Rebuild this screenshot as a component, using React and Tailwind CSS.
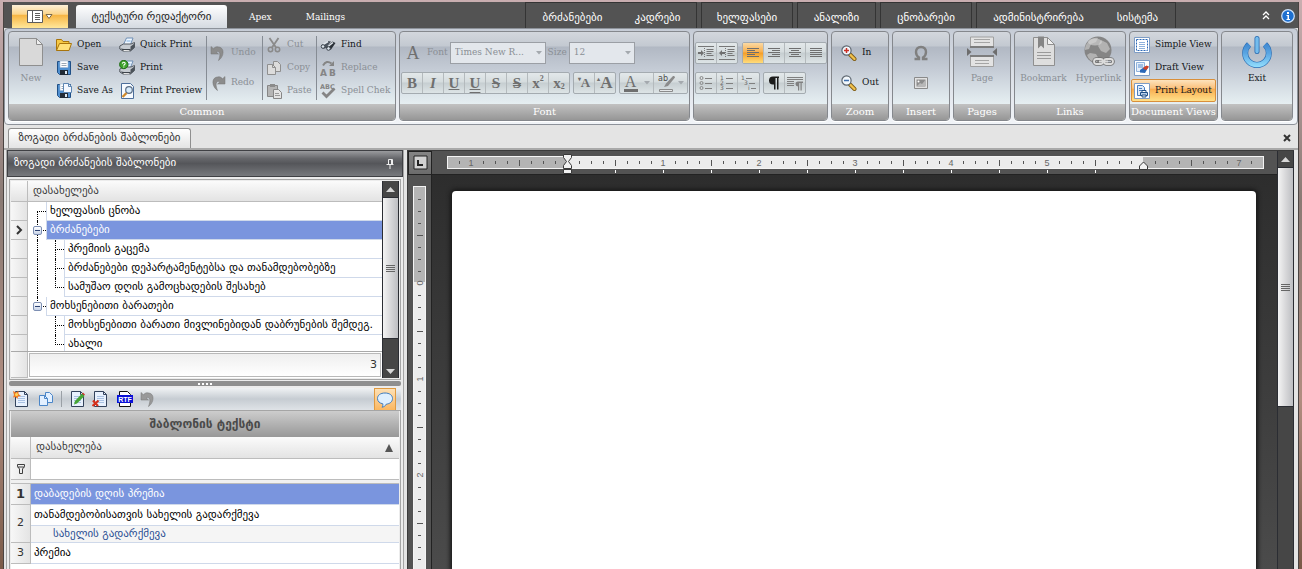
import React, { useState } from "react";

const sans = "font-['DejaVu_Sans',sans-serif]";
const serif = "font-['DejaVu_Serif',serif]";

/* ---------- icons ---------- */

const Svg = ({ w = 16, h = 16, children, className = "" }) => (
  <svg
    width={w}
    height={h}
    viewBox={`0 0 ${w} ${h}`}
    className={`block shrink-0 ${className}`}
    aria-hidden="true"
  >
    {children}
  </svg>
);

const NewIcon = () => (
  <Svg w={26} h={30}>
    <path d="M1.500 1.500h17l6 6v21h-23z" fill="#d9d9d9" stroke="#8f8f8f" />
    <path d="M18.500 1.500v6h6z" fill="#efefef" stroke="#8f8f8f" />
  </Svg>
);

const OpenIcon = () => (
  <Svg>
    <path d="M.5 13.500v-11h5l1.500 2h6v3" fill="#f6c945" stroke="#a8740c" />
    <path d="M.5 13.500l3-7h12l-2.500 7z" fill="#ffe07a" stroke="#a8740c" />
  </Svg>
);

const Floppy = () => (
  <>
    <path d="M1.500 1.500h13v13h-11l-2-2z" fill="#4f8fd0" stroke="#1f4f86" />
    <path d="M4 1h8v6.500h-8z" fill="#fff" stroke="#9fb8d4" strokeWidth=".6" />
    <path d="M5.500 3.500h5M5.500 5.500h5" stroke="#9aa7b5" />
    <path d="M4 10h8v5h-8z" fill="#222b36" />
    <path d="M9 11h2v3h-2z" fill="#dfe9f3" />
  </>
);

const SaveIcon = () => (
  <Svg>
    <Floppy />
  </Svg>
);

const SaveAsIcon = () => (
  <Svg>
    <Floppy />
    <path d="M7.500.5h5l3 3v6h-8z" fill="#f3f8ff" stroke="#5d86b3" />
    <path d="M12.500.5v3h3" fill="none" stroke="#5d86b3" />
  </Svg>
);

const Printer = () => (
  <>
    <path d="M4.500 7.500l3-6.500h6.500l-2.500 6.500z" fill="#eef6ff" stroke="#6f8fb5" />
    <path d="M7.500 4h4" stroke="#7fb0e0" />
    <path d="M.8 9l3.700-2h7.500l3.500-1.500v5l-4 3.500h-7.500l-3.200-2z" fill="#c6cbd1" stroke="#545a61" />
    <path d="M11.500 9.500l4-3v4l-4 3.500z" fill="#4c535b" />
    <path d="M1.500 11.500l3 2.500h7v-2h-6.500z" fill="#3e444b" />
    <path d="M4.500 13.500l6 .2" stroke="#f2f2f2" />
  </>
);

const QuickPrintIcon = () => (
  <Svg>
    <Printer />
  </Svg>
);

const PrintIcon = () => (
  <Svg>
    <Printer />
    <circle cx="4.800" cy="4.500" r="4.200" fill="#3fa32b" stroke="#1f6a14" />
    <path d="M3.300 3.600q.2-1.300 1.500-1.300t1.400 1.200q0 .8-1.400 1.700v.6" fill="none" stroke="#fff" strokeWidth="1.100" />
    <path d="M4.300 6.500h1v1h-1z" fill="#fff" />
  </Svg>
);

const PreviewIcon = () => (
  <Svg>
    <path d="M2.500.5h9l3 3v12h-12z" fill="#f7fbff" stroke="#4d6f9b" />
    <circle cx="10" cy="7" r="3.300" fill="#d9ecfb" stroke="#5a6e86" strokeWidth="1.200" />
    <path d="M7.500 10L3.500 14" stroke="#d08a2c" strokeWidth="2.400" />
  </Svg>
);

const UndoIcon = ({ flip, color = "#8c8c8c" }) => (
  <Svg className={flip ? "-scale-x-100" : ""}>
    <path d="M1 1.500v7.500h7.500L6 6.800C9 5.500 11.500 7.500 8.500 15.500 14 12 15.500 2 7.500 1.800 5.800 1.800 4.500 2.400 3.500 3.800z" fill={color} stroke="#777" strokeWidth=".5" />
  </Svg>
);

const CutIcon = () => (
  <Svg>
    <path d="M3.500 1l6.500 9.500M12.500 1L6 10.500" stroke="#8a8a8a" strokeWidth="1.800" />
    <circle cx="4.500" cy="12.500" r="2.200" fill="none" stroke="#8a8a8a" strokeWidth="1.500" />
    <circle cx="11.500" cy="12.500" r="2.200" fill="none" stroke="#8a8a8a" strokeWidth="1.500" />
  </Svg>
);

const CopyIcon = ({ fill = "#dcdcdc", stroke = "#8f8f8f" }) => (
  <Svg>
    <path d="M7.500 1.500h4l3 3v7h-7z" fill={fill} stroke={stroke} />
    <path d="M1.500 4.500h5l3 3v7h-8z" fill={fill} stroke={stroke} />
    <path d="M6.500 4.500v3h3" fill="none" stroke={stroke} />
  </Svg>
);

const PasteIcon = () => (
  <Svg>
    <path d="M1.500 2.500h10v11h-10z" fill="#b5b5b5" stroke="#868686" />
    <path d="M4 1h5v3h-5z" fill="#8b8b8b" />
    <path d="M7.500 6.500h5l3 3v6h-8z" fill="#e4e4e4" stroke="#868686" />
    <path d="M9 10.500h4M9 12.500h5" stroke="#999" />
  </Svg>
);

const FindIcon = () => (
  <Svg>
    <path d="M1 8.500l7-4.500 3 .5-5 6.500q-4 2-5-2.500z" fill="#4b535d" />
    <path d="M6 10.500l6.500-6 3 1.500-4.500 6.500q-4 1.500-5-2z" fill="#2b3138" />
    <path d="M3 7.500l5-3M8 9.500l5-4" stroke="#dfe5eb" strokeWidth="1.500" />
    <circle cx="3" cy="9.500" r="1.800" fill="#dfe7ef" stroke="#3b434c" />
    <circle cx="8.500" cy="11.500" r="1.800" fill="#dfe7ef" stroke="#3b434c" />
  </Svg>
);

const ReplaceIcon = () => (
  <Svg>
    <path d="M3 5.500q3.500-6 8.500-2" fill="none" stroke="#858585" strokeWidth="2" />
    <path d="M9 6h5v-5z" fill="#858585" />
    <text x="0" y="15.500" fontSize="9" fontWeight="bold" fill="#858585" className={sans}>A</text>
    <text x="9" y="15.500" fontSize="9" fontWeight="bold" fill="#858585" className={sans}>B</text>
  </Svg>
);

const SpellIcon = () => (
  <Svg>
    <text x="0" y="6" fontSize="6.500" fontWeight="bold" fill="#858585" className={sans}>ABC</text>
    <path d="M2.500 9.500l4 4 8-8" fill="none" stroke="#858585" strokeWidth="2.800" />
  </Svg>
);

const ZoomIcon = ({ out }) => (
  <Svg>
    <path d="M9 9.500l4.500 4.500" stroke="#7c5a12" strokeWidth="4" strokeLinecap="round" />
    <path d="M9.500 10l4 4" stroke="#f1c14d" strokeWidth="2.400" strokeLinecap="round" />
    <circle cx="5.500" cy="5.500" r="4.600" fill="#f2f7fb" stroke="#5d6670" strokeWidth="1.200" />
    <path d={out ? "M3 5.500h5" : "M3 5.500h5M5.500 3v5"} stroke={out ? "#3f6fae" : "#c92f24"} strokeWidth="1.500" />
  </Svg>
);

const OmegaIcon = () => (
  <Svg>
    <path d="M1.500 14h4.500v-1.500q-3-2-3-5.500 0-5 5-5t5 5q0 3.500-3 5.500v1.500h4.500" fill="none" stroke="#808080" strokeWidth="2.400" />
  </Svg>
);

const ImageIcon = () => (
  <Svg>
    <path d="M1.500 2.500h13v11h-13z" fill="#e2e2e2" stroke="#8a8a8a" />
    <path d="M3.500 4.500h9v7h-9z" fill="#8c8c8c" />
    <path d="M4 11l3-3 2 1 3-3.500v5.500z" fill="#b8b8b8" />
    <circle cx="5.500" cy="6.500" r="1" fill="#fff" />
  </Svg>
);

const PageIcon = () => (
  <Svg w={32} h={32}>
    <path d="M4.500 1v9.500h23V1z" fill="#e3e3e3" stroke="#a0a0a0" />
    <path d="M8 3.500h16M8 6.500h16" stroke="#a5a5a5" />
    <path d="M4 11h24" stroke="#7d7d7d" strokeWidth="2" />
    <path d="M1 12l4.500 4-4.500 4zM31 12l-4.500 4 4.500 4z" fill="#6d6d6d" />
    <path d="M4 20h24" stroke="#7d7d7d" strokeWidth="2" />
    <path d="M4.500 21v9.500h23V21" fill="#e3e3e3" stroke="#a0a0a0" />
    <path d="M9 24.500h14M9 27.500h14" stroke="#a5a5a5" />
  </Svg>
);

const BookmarkIcon = () => (
  <Svg w={32} h={32}>
    <path d="M5.500 1.500h14l7 7v21h-21z" fill="#dedede" stroke="#8f8f8f" />
    <path d="M19.500 1.500v7h7z" fill="#f1f1f1" stroke="#8f8f8f" />
    <path d="M10 .5h6v12l-3-3-3 3z" fill="#858585" />
    <path d="M9 16.500h14M9 19.500h14M9 22.500h14" stroke="#9a9a9a" />
  </Svg>
);

const GlobeIcon = () => (
  <Svg w={32} h={32}>
    <circle cx="15" cy="14" r="13.500" fill="#858585" />
    <path d="M5 6q5-5 10-4l-2 4-5 2-2 5-4 1q0-5 3-8zM18 4l6 3 3 6-4 4-5-2-3-5zM7 17l6 1 3 5-3 4q-7-2-9-8z" fill="#b2b2b2" />
    <ellipse cx="12" cy="6" rx="7" ry="3.500" fill="#d8d8d8" opacity=".6" />
    <rect x="11" y="23" width="9" height="5" rx="2.500" fill="none" stroke="#707070" strokeWidth="3.600" />
    <rect x="21" y="23" width="9" height="5" rx="2.500" fill="none" stroke="#707070" strokeWidth="3.600" />
    <rect x="11" y="23" width="9" height="5" rx="2.500" fill="none" stroke="#dcdcdc" strokeWidth="1.800" />
    <rect x="21" y="23" width="9" height="5" rx="2.500" fill="none" stroke="#dcdcdc" strokeWidth="1.800" />
    <path d="M16 25.500h9" stroke="#dcdcdc" strokeWidth="2" />
  </Svg>
);

const ExitIcon = () => (
  <Svg w={32} h={32}>
    <defs>
      <linearGradient id="power" gradientUnits="userSpaceOnUse" x1="0" y1="6" x2="0" y2="31">
        <stop offset="0" stopColor="#3b83cd" />
        <stop offset=".45" stopColor="#5aa5e2" />
        <stop offset="1" stopColor="#93defd" />
      </linearGradient>
    </defs>
    <path d="M8 8.500a11.800 11.800 0 1 0 16 0" fill="none" stroke="#2a6db3" strokeWidth="6" />
    <path d="M8 8.500a11.800 11.800 0 1 0 16 0" fill="none" stroke="url(#power)" strokeWidth="4.800" />
    <path d="M16 2.500v13" stroke="#2a6db3" strokeWidth="5" strokeLinecap="round" />
    <path d="M16 2.500v13" stroke="#74bced" strokeWidth="3.400" strokeLinecap="round" />
  </Svg>
);

const SimpleViewIcon = () => (
  <Svg>
    <path d="M.5.5h15v15h-15z" fill="#fff" stroke="#7e9cc4" />
    <path d="M2.500 2.500h11v11h-11z" fill="none" stroke="#2b68b8" strokeDasharray="2 1" />
    <path d="M5 5.500h6M5 7.500h6M5 9.500h6M5 11.500h6" stroke="#8fb2dc" />
  </Svg>
);

const DraftViewIcon = () => (
  <Svg>
    <path d="M.5.5h15v15h-15z" fill="#fff" stroke="#7e9cc4" />
    <path d="M2.500 2.500h8v9h-8z" fill="#e6effa" stroke="#8fb2dc" />
    <path d="M4 5h5M4 7h5" stroke="#5b8fd0" />
    <path d="M6 10l5-3.500 3.500.5-3.500 6-5-.5z" fill="#2b68b8" />
    <path d="M9.500 7.500l3-2 2.500 1-2.500 3.500-3-1z" fill="#d04025" />
  </Svg>
);

const PrintLayoutIcon = () => (
  <Svg>
    <path d="M.5.5h15v15h-15z" fill="#fff" stroke="#7e9cc4" />
    <path d="M3.500 2.500h5l2 2v8h-7z" fill="#dce9f8" stroke="#4b7fc0" />
    <path d="M5 5.500h3M5 7.500h3" stroke="#4b7fc0" />
    <path d="M6.500 9.500h7v3h-7z" fill="#b8cfea" stroke="#1f4f86" />
    <path d="M8 7.500h4v2h-4zM8 12h4v2h-4z" fill="#fff" stroke="#1f4f86" />
  </Svg>
);

const Lines = ({ rows }) => (
  <Svg>
    {rows.map(([x, w], i) => (
      <path key={i} d={`M${x} ${3.5 + i * 2}h${w}`} stroke="#6f6f6f" />
    ))}
  </Svg>
);

const IndentIcon = ({ flip }) => (
  <Svg>
    <path d="M0 1.500h16M0 14.500h16M8.500 4.500h7M8.500 6.500h7M8.500 8.500h5M8.500 10.500h7" stroke="#777" />
    <path d="M6.500 3v10" stroke="#777" strokeDasharray="1 1" />
    <path d={flip ? "M0 8l3-3v2h3v2h-3v2z" : "M6 8l-3-3v2h-3v2h3v2z"} fill="#6f6f6f" />
  </Svg>
);

const BulletsIcon = () => (
  <Svg>
    <path d="M7 3.500h7M7 8.500h7M7 13.500h7" stroke="#808080" />
    {[3, 8, 13].map((y) => (
      <circle key={y} cx="3.500" cy={y} r="1.500" fill="none" stroke="#888" />
    ))}
  </Svg>
);

const NumbersIcon = ({ multi }) => (
  <Svg>
    <path d={multi ? "M5 3.500h6M8 8.500h6M10 13.500h5" : "M7 3.500h7M7 8.500h7M7 13.500h7"} stroke="#808080" />
    <g fontSize="6" fill="#6a6a6a" className={sans}>
      <text x={multi ? 0 : 1} y="5">1</text>
      <text x={multi ? 3 : 1} y="10">{multi ? "3" : "2"}</text>
      <text x={multi ? 7 : 1} y="15">{multi ? "i" : "3"}</text>
    </g>
  </Svg>
);

const PilcrowIcon = () => (
  <Svg>
    <path d="M13 1.500H7a4 4 0 0 0 0 8h1v5h1.500v-11.500h1.500v11.500h1.500v-11.500h.5z" fill="#1b1b1b" />
  </Svg>
);

const ParagraphIcon = () => (
  <Svg>
    <path d="M0 2.500h16M0 4.500h16M0 6.500h7M0 8.500h7M0 10.500h7" stroke="#808080" />
    <path d="M16 6.500h-5a2.500 2.500 0 0 0 0 5v4h1.200v-7.500h1.300v7.500h1.200v-7.500h1.300z" fill="#808080" />
  </Svg>
);

const HighlightIcon = () => (
  <Svg w={20} h={18}>
    <text x="0" y="7" fontSize="8" fill="#4e4e4e" className={sans}>ab</text>
    <path d="M17 3.500l-7 8.500-4 1 2-3.500 7-7.500q2-.5 2 1.500z" fill="#8b8b8b" />
    <path d="M1.500 15.500h13v2h-13z" fill="#e5e8e9" stroke="#8b8b8b" />
  </Svg>
);

const Caret = () => (
  <Svg w={6} h={4}>
    <path d="M0 0h6L3 3.500z" fill="#a4a9ae" />
  </Svg>
);

const DocIcon = ({ children }) => (
  <Svg>
    <path d="M2.500.5h9l3 3v12h-12z" fill="#e8f1fd" stroke="#34435c" />
    <path d="M5 5.500h7M5 7.500h7M5 9.500h7M5 11.500h7" stroke="#a9c1e2" />
    <path d="M11.500.5v3h3" fill="none" stroke="#34435c" />
    {children}
  </Svg>
);

const RtfIcon = () => (
  <Svg>
    <path d="M2.500.5h8l3 3v12h-11z" fill="#fff" stroke="#111" />
    <rect x="0" y="4" width="16" height="8" fill="#0a10d8" />
    <text x="8" y="10.500" fontSize="7" fontWeight="bold" fill="#fff" textAnchor="middle" className="font-['Liberation_Sans',sans-serif]">RTF</text>
  </Svg>
);

const BubbleIcon = () => (
  <Svg w={18} h={18}>
    <path d="M9 2c4.500 0 7.500 2.200 7.500 5.500S13.500 13 10.500 13c-1 2-3 3-4.500 3.200.8-1 1-2 .8-3.400C3.500 12.200 1.500 10.300 1.500 7.500 1.500 4.200 4.500 2 9 2z" fill="#dff0ff" stroke="#3d7cc0" />
  </Svg>
);

const FilterIcon = () => (
  <Svg w={10} h={12}>
    <path d="M1.500 1.500h7v2L6.500 6v4.500h-3V6l-2-2.500zM1.500 4h7" fill="none" stroke="#3d3d3d" />
  </Svg>
);

const Triangle = ({ down, color = "#d8d8d8" }) => (
  <Svg w={9} h={5}>
    <path d={down ? "M0 0h9L4.500 5z" : "M4.500 0L9 5H0z"} fill={color} />
  </Svg>
);

/* ---------- ribbon ---------- */

const Group = ({ title, width, children }) => (
  <section
    className={`${width} flex shrink-0 flex-col overflow-hidden rounded-[4px] border border-[#85888d] bg-[linear-gradient(#d3d7dd,#c3c9d1_14px,#b1b8c3_15px,#c5ccd6_38px,#e6eff2_72px)] shadow-[0_1px_0_#fff]`}
  >
    <div className="flex h-[72px] items-start">{children}</div>
    <h2 className="h-4 bg-linear-to-b from-[#c2c2c2] to-[#969696] text-center text-[10px] leading-4 whitespace-nowrap text-white">
      {title}
    </h2>
  </section>
);

const Item = ({ icon, label, disabled, height = "h-[23px]", active }) => (
  <button
    type="button"
    disabled={disabled}
    className={`flex ${height} items-center gap-[5px] px-[2px] whitespace-nowrap ${
      disabled ? "text-[#8a8f95]" : "text-[#14171a]"
    } ${
      active
        ? "rounded-[2px] border border-[#d98f3a] bg-[linear-gradient(#fde3bd,#fbc07a_40%,#f9ab4e_42%,#ffe18a)]"
        : "border border-transparent"
    }`}
  >
    {icon}
    {label}
  </button>
);

const BigItem = ({ icon, label, disabled, width }) => (
  <button
    type="button"
    disabled={disabled}
    className={`flex ${width} shrink-0 flex-col items-center pt-1 whitespace-nowrap ${
      disabled ? "text-[#8a8f95]" : "text-[#14171a]"
    }`}
  >
    <span className="flex h-8 items-center">{icon}</span>
    <span className="h-5 leading-5">{label}</span>
  </button>
);

const Divider = () => <span className="mt-1 h-16 w-px shrink-0 bg-[#868c94]" />;

const Cluster = ({ children }) => (
  <div className="flex h-[22px] divide-x divide-[#b4babd] overflow-hidden rounded-[2px] border border-[#a4abb0] bg-[linear-gradient(#e3e8ea,#d5dcde_45%,#c6ced1_50%,#dde4e6)]">
    {children}
  </div>
);

const Tool = ({ label, active, width = "w-[21px]", children }) => (
  <button
    type="button"
    aria-label={label}
    className={`flex ${width} items-center justify-center font-['Liberation_Serif',serif] text-[15px] leading-5 text-[#6f6f6f] ${
      active ? "bg-[linear-gradient(#fbd9a4,#f8b04d_45%,#f59e28_50%,#ffdc7a)]" : ""
    }`}
  >
    {children}
  </button>
);

const Combo = ({ id, label, value, width }) => (
  <>
    <label htmlFor={id} className="px-[2px] text-[#8a8f95]">
      {label}
    </label>
    <span className="relative flex">
      <select
        id={id}
        disabled
        className={`${width} h-[22px] appearance-none border border-[#9b9fa5] bg-[#e3e7ec] pl-1 text-[#8a8f95] opacity-100`}
      >
        <option>{value}</option>
      </select>
      <span className="pointer-events-none absolute top-[9px] right-1">
        <Caret />
      </span>
    </span>
  </>
);

const Ribbon = () => (
  <div className="rounded-[4px] border border-[#8d929a] bg-linear-to-b from-[#c6ccd6] to-[#f1f4f8] p-[3px] pt-[2px]">
    <div className={`flex gap-[3px] ${serif} text-[9px]`}>
      <Group title="Common" width="w-[388px]">
        <BigItem icon={<NewIcon />} label="New" disabled width="w-[44px]" />
        <div className="flex w-[63px] shrink-0 flex-col pt-px">
          <Item icon={<OpenIcon />} label="Open" />
          <Item icon={<SaveIcon />} label="Save" />
          <Item icon={<SaveAsIcon />} label="Save As" />
        </div>
        <div className="flex w-[90px] shrink-0 flex-col pt-px">
          <Item icon={<QuickPrintIcon />} label="Quick Print" />
          <Item icon={<PrintIcon />} label="Print" />
          <Item icon={<PreviewIcon />} label="Print Preview" />
        </div>
        <Divider />
        <div className="flex w-[55px] shrink-0 flex-col pt-[6px]">
          <Item icon={<UndoIcon />} label="Undo" disabled height="h-[30px]" />
          <Item icon={<UndoIcon flip />} label="Redo" disabled height="h-[30px]" />
        </div>
        <Divider />
        <div className="flex w-[53px] shrink-0 flex-col pt-px">
          <Item icon={<CutIcon />} label="Cut" disabled />
          <Item icon={<CopyIcon />} label="Copy" disabled />
          <Item icon={<PasteIcon />} label="Paste" disabled />
        </div>
        <Divider />
        <div className="flex flex-col pt-px">
          <Item icon={<FindIcon />} label="Find" />
          <Item icon={<ReplaceIcon />} label="Replace" disabled />
          <Item icon={<SpellIcon />} label="Spell Chek" disabled />
        </div>
      </Group>

      <Group title="Font" width="w-[291px]">
        <div className="flex flex-col gap-2 px-px pt-[10px]">
          <div className="flex items-center">
            <span className="w-6 text-center font-['Liberation_Serif',serif] text-[18px] leading-5 text-[#707070]">
              A
            </span>
            <Combo id="font" label="Font" value="Times New R..." width="w-24" />
            <Combo id="size" label="Size" value="12" width="w-[66px]" />
          </div>
          <div className="flex gap-[3px]">
            <Cluster>
              <Tool label="Bold"><b>B</b></Tool>
              <Tool label="Italic"><b><i>I</i></b></Tool>
              <Tool label="Underline"><b className="underline">U</b></Tool>
              <Tool label="Double underline">
                <b className="underline decoration-double">U</b>
              </Tool>
              <Tool label="Strikeout"><b className="line-through">S</b></Tool>
              <Tool label="Double strikeout">
                <b className="line-through decoration-double">S</b>
              </Tool>
              <Tool label="Superscript"><b>x</b><b className="pb-2 text-[8px]">2</b></Tool>
              <Tool label="Subscript" width="w-[20px]"><b>x</b><b className="pt-2 text-[8px]">2</b></Tool>
            </Cluster>
            <Cluster>
              <Tool label="Shrink font">
                <b className="pb-2 text-[6px]">▾</b><b className="text-[13px]">A</b>
              </Tool>
              <Tool label="Grow font" width="w-[20px]">
                <b className="pb-2 text-[6px]">▴</b><b className="text-[17px]">A</b>
              </Tool>
            </Cluster>
            <Cluster>
              <Tool label="Font color" width="w-[34px]">
                <span className="mr-[6px] w-[14px] border-b-[3px] border-[#6f6f6f] text-center text-[16px] leading-[14px]">
                  A
                </span>
                <Caret />
              </Tool>
              <Tool label="Highlight" width="w-[33px]">
                <HighlightIcon />
                <Caret />
              </Tool>
            </Cluster>
          </div>
        </div>
      </Group>

      <Group title="" width="w-[135px]">
        <div className="flex flex-col gap-2 px-px pt-[10px]">
          <div className="flex gap-1">
            <Cluster>
              <Tool label="Increase indent"><IndentIcon /></Tool>
              <Tool label="Decrease indent" width="w-[20px]"><IndentIcon flip /></Tool>
            </Cluster>
            <Cluster>
              <Tool label="Align left" active>
                <Lines rows={[[2, 12], [2, 8], [2, 12], [2, 8], [2, 12]]} />
              </Tool>
              <Tool label="Align right">
                <Lines rows={[[2, 12], [6, 8], [2, 12], [6, 8], [2, 12]]} />
              </Tool>
              <Tool label="Center">
                <Lines rows={[[2, 12], [4, 8], [2, 12], [4, 8], [2, 12]]} />
              </Tool>
              <Tool label="Justify" width="w-[20px]">
                <Lines rows={[[2, 12], [2, 12], [2, 12], [2, 12], [2, 12]]} />
              </Tool>
            </Cluster>
          </div>
          <div className="flex gap-[3px]">
            <Cluster>
              <Tool label="Bullets"><BulletsIcon /></Tool>
              <Tool label="Numbering"><NumbersIcon /></Tool>
              <Tool label="Multilevel list"><NumbersIcon multi /></Tool>
            </Cluster>
            <Cluster>
              <Tool label="Show marks"><PilcrowIcon /></Tool>
              <Tool label="Paragraph" width="w-[20px]"><ParagraphIcon /></Tool>
            </Cluster>
          </div>
        </div>
      </Group>

      <Group title="Zoom" width="w-[58px]">
        <div className="flex flex-col pt-[6px] pl-[6px]">
          <Item icon={<ZoomIcon />} label="In" height="h-[30px]" />
          <Item icon={<ZoomIcon out />} label="Out" height="h-[30px]" />
        </div>
      </Group>

      <Group title="Insert" width="w-[58px]">
        <div className="flex flex-1 flex-col items-center pt-[6px]">
          <Item icon={<OmegaIcon />} disabled height="h-[30px]" />
          <Item icon={<ImageIcon />} disabled height="h-[30px]" />
        </div>
      </Group>

      <Group title="Pages" width="w-[58px]">
        <BigItem icon={<PageIcon />} label="Page" disabled width="w-full" />
      </Group>

      <Group title="Links" width="w-[112px]">
        <BigItem icon={<BookmarkIcon />} label="Bookmark" disabled width="w-[57px]" />
        <BigItem icon={<GlobeIcon />} label="Hyperlink" disabled width="w-[53px]" />
      </Group>

      <Group title="Document Views" width="w-[89px]">
        <div className="flex flex-1 flex-col px-px pt-px">
          <Item icon={<SimpleViewIcon />} label="Simple View" />
          <Item icon={<DraftViewIcon />} label="Draft View" />
          <Item icon={<PrintLayoutIcon />} label="Print Layout" active />
        </div>
      </Group>

      <Group title="" width="w-[72px]">
        <BigItem icon={<ExitIcon />} label="Exit" width="w-full" />
      </Group>
    </div>
  </div>
);

const menuGroups = [
  [["ბრძანებები", "w-[95px]"], ["კადრები", "w-[79px]"]],
  [["ხელფასები", "w-[92px]"]],
  [["ანალიზი", "w-[79px]"]],
  [["ცნობარები", "w-[92px]"]],
  [["ადმინისტრირება", "w-[125px]"], ["სისტემა", "w-[77px]"]],
];

const TitleBar = () => (
  <header className={`flex h-[26px] items-end bg-[#535353] pl-2 text-[11px] text-white ${sans}`}>
    <button
      type="button"
      aria-label="Menu"
      className="flex h-[23px] w-14 items-center justify-center gap-[2px] bg-[linear-gradient(#fdf0d8,#fbd58b_40%,#f6b544_45%,#ffe79a)]"
    >
      <Svg w={16} h={14}>
        <path d="M.5.5h15v12h-15z" fill="#fff" stroke="#5c5c5c" />
        <path d="M5.500.5v12M8 3.500h5M8 5.500h5M8 7.500h5M8 9.500h5" stroke="#5c5c5c" />
      </Svg>
      <Svg w={8} h={6}>
        <path d="M1 .5h6l-3 4z" fill="#fff" stroke="#7a6a4a" />
      </Svg>
    </button>
    <nav className="ml-2 flex flex-1 items-end leading-6">
      <a href="#editor" className="h-[23px] w-[151px] rounded-t-[3px] bg-linear-to-b from-white to-[#d5dae1] text-center whitespace-nowrap text-[#222]">
        ტექსტური რედაქტორი
      </a>
      <a href="#apex" className={`ml-[22px] h-[23px] ${serif} text-[9px]`}>Apex</a>
      <a href="#mailings" className={`ml-[34px] h-[23px] ${serif} text-[9px]`}>Mailings</a>
    </nav>
    <nav className="mr-[86px] flex gap-1">
      {menuGroups.map((group) => (
        <div key={group[0][0]} className="flex h-[26px] border-x border-t border-[#343434] bg-[#535353]">
          {group.map(([name, width]) => (
            <a key={name} href="#menu" className={`${width} -mx-px text-center leading-[29px] whitespace-nowrap`}>
              {name}
            </a>
          ))}
        </div>
      ))}
    </nav>
    <button type="button" aria-label="Collapse" className="mb-[8px]">
      <Svg w={8} h={9}>
        <path d="M1 4l3-3 3 3M1 8l3-3 3 3" fill="none" stroke="#fff" strokeWidth="1.300" />
      </Svg>
    </button>
    <button type="button" aria-label="About" className="mr-[3px] mb-[5px] ml-[11px]">
      <Svg w={14} h={14}>
        <circle cx="7" cy="7" r="6.300" fill="#1d6fd0" stroke="#cfe3fb" strokeWidth="1.200" />
        <path d="M6 3h2v2h-2zM5.500 6h2.500v4h1v1h-3.500v-1h1v-3h-1z" fill="#fff" />
      </Svg>
    </button>
  </header>
);

/* ---------- left panel ---------- */

const tree = [
  { text: "ხელფასის ცნობა", lines: ["top"] },
  { text: "ბრძანებები", lines: ["tee"], toggle: true },
  { text: "პრემიის გაცემა", lines: ["bar", "tee"] },
  { text: "ბრძანებები დეპარტამენტებსა და თანამდებობებზე", lines: ["bar", "tee"] },
  { text: "სამუშაო დღის გამოცხადების შესახებ", lines: ["bar", "ell"] },
  { text: "მოხსენებითი ბარათები", lines: ["ell"], toggle: true },
  { text: "მოხსენებითი ბარათი მივლინებიდან დაბრუნების შემდეგ.", lines: ["none", "tee"] },
  { text: "ახალი", lines: ["none", "ell"] },
];

const Guide = ({ kind, toggle }) => {
  const up = kind === "tee" || kind === "ell" || kind === "bar";
  const down = kind === "tee" || kind === "top" || kind === "bar";
  const right = kind === "tee" || kind === "top" || kind === "ell";
  return (
    <span className="relative flex w-[18px] shrink-0 flex-col pl-[9px]">
      <i
        className={`h-[10px] border-dotted border-black ${up ? "border-l" : ""} ${right ? "border-b" : ""}`}
      />
      <i className={`flex-1 border-dotted border-black ${down ? "border-l" : ""}`} />
      {toggle && (
        <button
          type="button"
          aria-label="Collapse"
          className="absolute top-[5px] left-[5px] flex size-[9px] items-center justify-center rounded-[2px] border border-[#7d8fb3] bg-linear-to-b from-white to-[#c7d3e8]"
        >
          <i className="h-px w-[5px] bg-[#2d4373]" />
        </button>
      )}
    </span>
  );
};

const ScrollBar = ({ thumb }) => (
  <div className="flex w-[17px] shrink-0 flex-col items-center border-x border-[#2b2d33] bg-[#464646]">
    <button type="button" aria-label="Scroll up" className="flex h-4 w-full shrink-0 items-center justify-center">
      <Triangle />
    </button>
    <div className={`${thumb} flex w-full flex-col items-center justify-center gap-px border-y border-[#2b2d33] bg-linear-to-r from-[#f4f4f4] via-[#d8d8da] to-[#bdbec2]`}>
      {[0, 1, 2, 3].map((n) => (
        <i key={n} className="h-px w-[9px] bg-[#666]" />
      ))}
    </div>
    <span className="flex-1" />
  </div>
);

const head = "bg-linear-to-b from-[#fbfbfb] to-[#e3e3e3] text-left font-normal text-[#3c3c3c]";
const side = "border-r border-b border-[#bcbcbc] bg-linear-to-r from-[#f7f7f7] to-[#e4e4e4]";

const TreePanel = () => {
  const [selected, setSelected] = useState(1);
  return (
    <div className="mx-[2px] mt-[2px] border border-[#a5a5a5] p-px">
      <div className="flex h-[197px] bg-white">
        <div className="flex min-w-0 flex-1 flex-col">
          <div className="flex-1 overflow-hidden">
            <table className="w-full table-fixed border-separate border-spacing-0">
              <thead>
                <tr className="h-[21px]">
                  <th className={`w-[17px] border-r border-b border-[#bcbcbc] ${head}`} />
                  <th className={`border-b border-[#bcbcbc] p-0 pl-[5px] ${head}`}>დასახელება</th>
                </tr>
              </thead>
              <tbody>
                {tree.map((row, i) => (
                  <tr key={row.text} onClick={() => setSelected(i)}>
                    <td className={`h-[19px] p-0 ${side}`}>
                      {i === selected && (
                        <Svg w={16} h={10}>
                          <path d="M6 1l4 4-4 4" fill="none" stroke="#333" strokeWidth="2" />
                        </Svg>
                      )}
                    </td>
                    <td className="p-0">
                      <div className="flex h-[19px]">
                        {row.lines.map((kind, n) => (
                          <Guide key={n} kind={kind} toggle={row.toggle} />
                        ))}
                        <span
                          className={`min-w-0 flex-1 overflow-hidden border-b border-l border-[#cfd9ea] pl-[3px] leading-[18px] whitespace-nowrap ${
                            i === selected ? "bg-[#7a95de] text-white" : "text-black"
                          }`}
                        >
                          {row.text}
                        </span>
                      </div>
                    </td>
                  </tr>
                ))}
              </tbody>
            </table>
          </div>
          <div className="flex h-[27px] shrink-0 border-t border-[#a9a9a9]">
            <span className={`w-[17px] ${side}`} />
            <span className="m-px flex-1 border border-[#b9b9b9] bg-linear-to-b from-[#efefef] to-white pr-[3px] text-right leading-[22px] text-[#333]">
              3
            </span>
          </div>
        </div>
        <div className="relative flex">
          <ScrollBar thumb="h-[142px]" />
          <span className="absolute bottom-1 left-[4px]">
            <Triangle down />
          </span>
        </div>
      </div>
    </div>
  );
};

const Toolbar = () => (
  <div className="mx-[2px] flex h-[22px] items-center bg-linear-to-b from-[#f0f2f4] via-[#c6ccd2] to-[#dfe3e7] pl-[4px]">
    <button type="button" aria-label="New template">
      <DocIcon>
        <path d="M0 0l3 1.500L5.500 0v3L8 5 5 5.500 4.500 8 2.500 6 0 6.500 1 4z" fill="#f07a22" />
        <circle cx="3.500" cy="3.500" r="1.500" fill="#ffd95a" />
      </DocIcon>
    </button>
    <button type="button" aria-label="Copy" className="ml-[9px]">
      <CopyIcon fill="#e3f0ff" stroke="#4b86c8" />
    </button>
    <span className="mx-[7px] h-4 w-px bg-[#9aa0a6]" />
    <button type="button" aria-label="Edit">
      <DocIcon>
        <path d="M5 13.500l1-3.500 7-7.500 2.500 2.500-7.500 7.500z" fill="#46a536" />
        <path d="M13 2.500l1-1 2 2-1 1z" fill="#d23b2a" />
      </DocIcon>
    </button>
    <button type="button" aria-label="Delete" className="ml-[7px]">
      <DocIcon>
        <path d="M1 9.500l5 5.500M6.500 9.500L.5 15" stroke="#d6301c" strokeWidth="2.200" />
      </DocIcon>
    </button>
    <button type="button" aria-label="RTF" className="ml-[9px]">
      <RtfIcon />
    </button>
    <button type="button" aria-label="Undo" disabled className="ml-[7px]">
      <UndoIcon color="#999" />
    </button>
    <button
      type="button"
      aria-label="Comment"
      className="mr-[5px] ml-auto flex h-[22px] w-[22px] items-center justify-center border border-b-0 border-[#e09a40] bg-linear-to-b from-[#fde0b4] to-[#fbb75f]"
    >
      <BubbleIcon />
    </button>
  </div>
);

const TemplateGrid = () => (
  <div className="mx-[2px] flex min-h-0 flex-1 flex-col border border-b-0 border-[#a5a5a5] px-px">
    <h3 className="h-[26px] shrink-0 bg-linear-to-b from-[#cdcdcd] to-[#989898] text-center text-[12px] leading-[26px] font-bold text-[#4a4a4a]">
      შაბლონის ტექსტი
    </h3>
    <div className="flex-1 bg-white">
      <table className="w-full table-fixed border-separate border-spacing-0">
        <thead>
          <tr className="h-[22px]">
            <th className={`w-5 border-r border-b border-[#bcbcbc] ${head}`} />
            <th className={`border-b border-[#bcbcbc] p-0 pr-[6px] pl-[5px] ${head}`}>
              <span className="flex items-center justify-between">
                დასახელება
                <Svg w={8} h={8}>
                  <path d="M4 0l4 8H0z" fill="#555" />
                </Svg>
              </span>
            </th>
          </tr>
          <tr>
            <td className={`h-[21px] p-0 ${side}`}>
              <span className="flex justify-center">
                <FilterIcon />
              </span>
            </td>
            <td className="border-b border-[#bcbcbc] p-0">
              <input aria-label="Filter" className="block h-5 w-full px-1 outline-none" />
            </td>
          </tr>
          <tr>
            <td colSpan={2} className="h-1 border-b border-[#bcbcbc] bg-[#f0f0f0] p-0" />
          </tr>
        </thead>
        <tbody>
          <tr>
            <td className={`h-[21px] p-0 text-center text-[13px] font-bold text-[#333] ${side}`}>1</td>
            <td className="border-b border-[#cfd9ea] bg-[#7a95de] p-0 pl-[3px] text-white">
              დაბადების დღის პრემია
            </td>
          </tr>
          <tr>
            <td rowSpan={2} className={`p-0 text-center text-[#333] ${side}`}>2</td>
            <td className="h-[21px] border-b border-[#cfd9ea] p-0 pl-[3px]">
              თანამდებობისათვის სახელის გადარქმევა
            </td>
          </tr>
          <tr>
            <td className="h-[17px] border-b border-[#cfd9ea] bg-[#f5f5f5] p-0 pl-[22px] leading-4 text-[#2b4f93]">
              სახელის გადარქმევა
            </td>
          </tr>
          <tr>
            <td className={`h-[21px] p-0 text-center text-[#333] ${side}`}>3</td>
            <td className="border-b border-[#cfd9ea] p-0 pl-[3px]">პრემია</td>
          </tr>
        </tbody>
      </table>
    </div>
  </div>
);

const LeftPanel = () => (
  <aside className="flex w-[398px] shrink-0 flex-col border-x border-[#a5a5a5] bg-[#ececec]">
    <h2 className="flex h-[27px] shrink-0 items-center justify-between border border-[#3f4044] bg-[linear-gradient(#9a9b9e,#66676b_30%,#55565a_50%,#77797d)] pr-[7px] pl-[6px] text-white">
      ზოგადი ბრძანების შაბლონები
      <Svg w={10} h={10}>
        <path d="M3.500.5h4v5h-4zM6.500.5v5M1.500 5.500h7M5 6v4" fill="none" stroke="#eee" />
      </Svg>
    </h2>
    <TreePanel />
    <div className="mx-[2px] mt-px mb-[2px] flex h-[5px] shrink-0 items-center justify-center gap-[2px] rounded-[2px] bg-[#8f8f8f]">
      {[0, 1, 2, 3].map((n) => (
        <i key={n} className="size-[2px] bg-white" />
      ))}
    </div>
    <Toolbar />
    <TemplateGrid />
  </aside>
);

/* ---------- document ---------- */

const hCells = Array.from({ length: 67 }, (_, i) => i - 9);
const vCells = Array.from({ length: 31 }, (_, i) => i - 7);

const HRuler = () => (
  <div className="relative ml-[15px] h-[13px] w-[817px] shrink-0 border border-[#f4f4f4] bg-[linear-gradient(to_right,#b4b4b4_119px,#ececec_119px,#ececec_695px,#b4b4b4_695px)]">
    <div className="flex h-full items-center pl-[5px]">
      {hCells.map((n) => (
        <span key={n} className="flex w-3 shrink-0 justify-center text-[#666]">
          {n === 0 || n === 48 ? null : n % 8 === 0 ? (
            Math.abs(n / 8)
          ) : (
            <i className={`w-px bg-[#555] ${n % 4 === 0 ? "h-[6px]" : "h-[3px]"}`} />
          )}
        </span>
      ))}
    </div>
    <div className="absolute top-[13px] left-[167px] flex gap-[47px]">
      {Array.from({ length: 11 }, (_, n) => (
        <i key={n} className="h-[3px] w-px bg-white" />
      ))}
    </div>
    <span className="absolute -top-[3px] left-[115px]">
      <Svg w={9} h={20}>
        <path d="M.5.5h8v3l-3 4 3 4v3h-8v-3l3-4-3-4z" fill="#f2f2f2" stroke="#3a3a3a" />
        <path d="M.5 15.500h8v4h-8z" fill="#f2f2f2" stroke="#3a3a3a" />
      </Svg>
    </span>
    <span className="absolute top-1 left-[691px]">
      <Svg w={9} h={9}>
        <path d="M4.500 1l4 4v3.500h-8V5z" fill="#f2f2f2" stroke="#3a3a3a" />
      </Svg>
    </span>
  </div>
);

const VRuler = () => (
  <div className="flex w-6 shrink-0 flex-col items-center overflow-hidden border-r border-[#222] bg-[#535353] pt-[11px]">
    <div className="w-[13px] flex-1 border border-b-0 border-[#f4f4f4] bg-[linear-gradient(#b4b4b4_95px,#ececec_95px)] pt-[6px]">
      {vCells.map((n) => (
        <span key={n} className="flex h-3 items-center justify-center text-[#666]">
          {n % 8 === 0 ? (
            <b className="-rotate-90 font-normal">{Math.abs(n / 8)}</b>
          ) : (
            <i className={`h-px bg-[#555] ${n % 4 === 0 ? "w-[6px]" : "w-[3px]"}`} />
          )}
        </span>
      ))}
      {/* the next inch mark starts at the window's edge */}
      <span className="flex h-3 items-center justify-center text-[#666]">
        <b className="-rotate-90 font-normal">3</b>
      </span>
    </div>
  </div>
);

const Editor = () => (
  <main className="flex min-w-0 flex-1 border-t border-l border-[#3a3a3a]">
    <div className="flex min-w-0 flex-1 flex-col font-['Liberation_Sans',sans-serif] text-[9px] leading-3">
      <div className="flex h-6 shrink-0 items-center border-b border-[#222] bg-[#535353]">
        <button
          type="button"
          aria-label="Tab stop"
          className="flex h-6 w-6 shrink-0 items-center justify-center border border-[#222] bg-linear-to-b from-[#858585] to-[#6c6c6c]"
        >
          <Svg w={15} h={15}>
            <path d="M1 1h13v13H1z" fill="#d2d2d2" stroke="#222" />
            <path d="M5 5v5h5" fill="none" stroke="#222" strokeWidth="2" />
          </Svg>
        </button>
        <HRuler />
      </div>
      <div className="flex min-h-0 flex-1">
        <VRuler />
        <div className="flex flex-1 bg-linear-to-b from-[#2d2d2d] to-[#4b4b4b] px-[21px] pt-4 pl-5">
          <textarea
            aria-label="Document"
            className="flex-1 resize-none rounded-t-[4px] bg-white p-24 shadow-[0_0_4px_2px_#181818] outline-none"
          />
        </div>
      </div>
    </div>
    <ScrollBar thumb="h-[240px]" />
  </main>
);

export default function App() {
  return (
    <div className="h-screen overflow-hidden bg-[linear-gradient(#c9aeb0,#8a7a74_35%,#b08d80_70%,#7a5a48)] px-[3px] pt-[2px]">
      <div className={`flex h-full flex-col border-x border-[#4a4442] bg-[#e4e4e4] text-[11px] ${sans}`}>
        <TitleBar />
        <Ribbon />
        <div className="flex h-[25px] shrink-0 items-end justify-between border-b-2 border-[#a9a9a9] pl-1 pr-[7px]">
          <button
            type="button"
            className="h-[20px] w-[183px] rounded-t-[3px] border border-b-0 border-[#8f8f8f] bg-linear-to-b from-white to-[#e4e4e4] whitespace-nowrap text-[#333]"
          >
            ზოგადი ბრძანების შაბლონები
          </button>
          <button type="button" aria-label="Close" className="mb-[6px]">
            <Svg w={8} h={8}>
              <path d="M1 1l6 6M7 1L1 7" stroke="#333" strokeWidth="2" />
            </Svg>
          </button>
        </div>
        <div className="flex min-h-0 flex-1 gap-[3px] pr-[4px] pl-[2px]">
          <LeftPanel />
          <Editor />
        </div>
      </div>
    </div>
  );
}
